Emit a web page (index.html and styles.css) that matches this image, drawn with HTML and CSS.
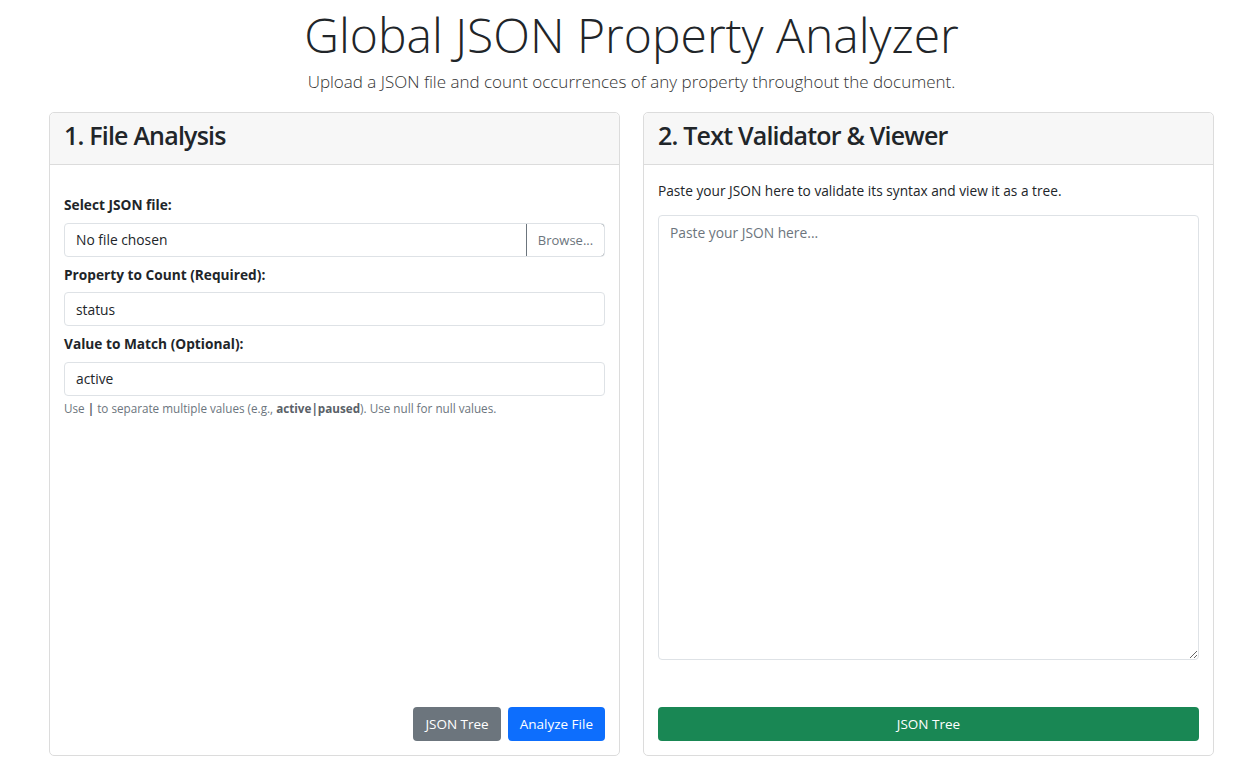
FILE: index.html
```html
<!DOCTYPE html>
<html lang="en">
<head>
<meta charset="utf-8">
<title>Global JSON Property Analyzer</title>
<link rel="stylesheet" href="styles.css">
</head>
<body>
<div class="page">
<header class="hero">
  <h1 class="title">Global JSON Property Analyzer</h1>
  <p class="lead">Upload a JSON file and count occurrences of any property throughout the document.</p>
</header>
<main class="grid">
  <section class="card">
    <div class="card-header"><h3>1. File Analysis</h3></div>
    <div class="card-body">
      <div class="group first">
        <label class="label">Select JSON file:</label>
        <div class="file-input">
          <span class="file-name">No file chosen</span>
          <span class="browse">Browse...</span>
        </div>
      </div>
      <div class="group">
        <label class="label" for="prop">Property to Count (Required):</label>
        <input id="prop" class="control" type="text" value="status">
      </div>
      <div class="group">
        <label class="label" for="val">Value to Match (Optional):</label>
        <input id="val" class="control" type="text" value="active">
        <div class="help">Use <b>|</b> to separate multiple values (e.g., <b>active|paused</b>). Use null for null values.</div>
      </div>
      <div class="actions">
        <button class="btn btn-gray">JSON Tree</button>
        <button class="btn btn-blue">Analyze File</button>
      </div>
    </div>
  </section>
  <section class="card">
    <div class="card-header"><h3>2. Text Validator &amp; Viewer</h3></div>
    <div class="card-body">
      <p class="intro">Paste your JSON here to validate its syntax and view it as a tree.</p>
      <textarea class="area" placeholder="Paste your JSON here..."></textarea>
      <div class="actions full">
        <button class="btn btn-green">JSON Tree</button>
      </div>
    </div>
  </section>
</main>
</div>
</body>
</html>
```
FILE: styles.css
```css
* { box-sizing: border-box; }
body {
  margin: 0;
  font-family: "Open Sans", "Noto Sans", sans-serif;
  color: #212529;
  background: #fff;
  font-size: 13px;
}
.page {
  width: 1165px;
  margin: 0 0 0 49px;
}
.hero { text-align: center; padding-top: 4px; }
.title {
  margin: 0;
  font-size: 48px;
  font-weight: 300;
  line-height: 62px;
  color: #212529;
}
.lead {
  margin: 3px 0 0;
  font-size: 17px;
  font-weight: 300;
  line-height: 26px;
  color: #333;
}
.grid {
  display: grid;
  grid-template-columns: 1fr 1fr;
  gap: 23px;
  margin-top: 17px;
}
.card {
  border: 1px solid #dcdcdc;
  border-radius: 5px;
  display: flex;
  flex-direction: column;
  background: #fff;
}
.card-header {
  background: #f7f7f7;
  border-bottom: 1px solid #dcdcdc;
  border-radius: 5px 5px 0 0;
  height: 52px;
  padding: 0 14px 8px;
  display: flex;
  align-items: center;
}
.card-header h3 {
  margin: 0;
  font-size: 25px;
  font-weight: 600;
  letter-spacing: -0.8px;
  color: #212529;
}
.card-body {
  flex: 1;
  display: flex;
  flex-direction: column;
  padding: 16px 14px 14px;
}
.group { margin-bottom: 8px; display: flex; flex-direction: column; }
.group.first { margin-top: 14px; }
.label {
  font-weight: 700;
  font-size: 13.7px;
  line-height: 19.5px;
  margin-bottom: 8px;
}
.file-input {
  display: flex;
  height: 34px;
  border: 1px solid #dee2e6;
  border-radius: 4px;
  overflow: hidden;
}
.file-name {
  flex: 1;
  padding: 0 11px;
  display: flex;
  align-items: center;
  font-size: 13.8px;
}
.browse {
  width: 79px;
  border: 1px solid #6c757d;
  border-radius: 0 4px 4px 0;
  margin: -1px -1px -1px 0;
  display: flex;
  align-items: center;
  justify-content: center;
  color: #6c757d;
  font-size: 13px;
}
.control {
  height: 34px;
  border: 1px solid #dee2e6;
  border-radius: 4px;
  padding: 0 11px;
  font-family: inherit;
  font-size: 13.8px;
  color: #212529;
}
.help {
  margin-top: 3px;
  font-size: 11.7px;
  line-height: 18px;
  color: #6c757d;
}
.help b { color: #5a6168; }
.intro {
  margin: 0 0 14px;
  font-size: 13.7px;
  line-height: 19.5px;
}
.area {
  height: 445px;
  border: 1px solid #dee2e6;
  border-radius: 4px;
  padding: 7px 11px;
  font-family: inherit;
  font-size: 13.8px;
  resize: vertical;
}
.area::placeholder { color: #6c757d; }
.actions {
  margin-top: auto;
  display: flex;
  justify-content: flex-end;
  gap: 7px;
}
.btn {
  height: 34px;
  border: 0;
  border-radius: 4px;
  padding: 0 12px;
  font-family: inherit;
  font-size: 13.5px;
  color: #fff;
}
.btn-gray { background: #6c757d; }
.btn-blue { background: #0d6efd; }
.btn-green { background: #198754; width: 100%; }
.actions.full { padding-top: 47px; }
```
